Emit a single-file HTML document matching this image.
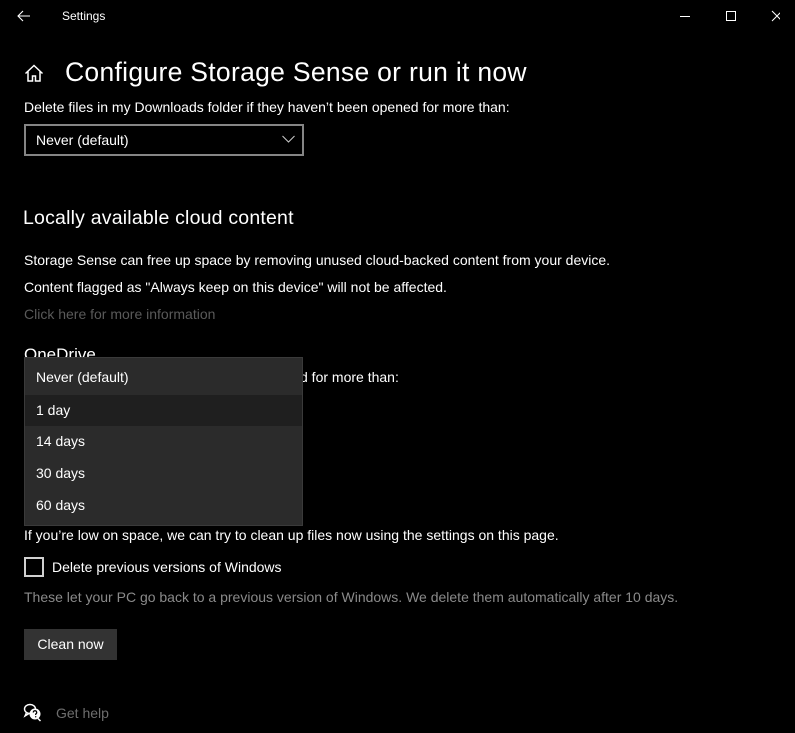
<!DOCTYPE html>
<html><head><meta charset="utf-8"><style>
*{margin:0;padding:0;box-sizing:border-box}
body{width:795px;height:733px;background:#000;color:#fff;font-family:"Liberation Sans",sans-serif;font-size:14px;position:relative;overflow:hidden}
.a{position:absolute;white-space:nowrap}
.g{color:#8a8a8a}
.menu{position:absolute;left:24px;top:357px;width:279px;height:169px;background:#2b2b2b;border:1px solid #3a3a3a}
.menu div{position:absolute;left:0;width:277px;height:30px;line-height:30px;padding-left:11px}
</style></head><body>
<svg class="a" style="left:17px;top:10px" width="14" height="12" viewBox="0 0 14 12"><path d="M13 6H1M6 1L1 6l5 5" stroke="#fff" stroke-width="1.1" fill="none"/></svg>
<div class="a" style="left:62px;top:9px;font-size:12px">Settings</div>
<svg class="a" style="left:680px;top:10px" width="100" height="14" viewBox="0 0 100 14"><path d="M0 6.5h10" stroke="#fff"/><rect x="46.5" y="1.5" width="9" height="9" stroke="#fff" fill="none"/><path d="M92 1l10 10M102 1l-10 10" stroke="#fff"/></svg>
<svg class="a" style="left:24px;top:64px" width="20" height="18" viewBox="0 0 20 18"><path d="M1.5 9.5L10 1.5l8.5 8M4 7.5V17h4.5v-5h3v5H16V7.5" stroke="#fff" stroke-width="1.5" fill="none"/></svg>
<div class="a" style="left:65px;top:57px;font-size:26.5px;letter-spacing:0.3px">Configure Storage Sense or run it now</div>
<div class="a" style="left:24px;top:99px">Delete files in my Downloads folder if they haven’t been opened for more than:</div>
<div class="a" style="left:24px;top:124px;width:280px;height:32px;border:2px solid #858585;padding-left:10px;line-height:28px">Never (default)</div>
<svg class="a" style="left:282px;top:135px" width="13" height="8" viewBox="0 0 13 8"><path d="M0.5 1l6 6 6-6" stroke="#ccc" fill="none"/></svg>
<div class="a" style="left:23px;top:207px;font-size:19.5px;letter-spacing:0.2px">Locally available cloud content</div>
<div class="a" style="left:24px;top:252px">Storage Sense can free up space by removing unused cloud-backed content from your device.</div>
<div class="a" style="left:24px;top:279px">Content flagged as "Always keep on this device" will not be affected.</div>
<div class="a" style="left:24px;top:306px;color:#5a5a5a">Click here for more information</div>
<div class="a" style="left:24px;top:345px;font-size:17px">OneDrive</div>
<div class="a" style="left:300px;top:369px">d for more than:</div>
<div class="menu">
<div style="top:4px">Never (default)</div>
<div style="top:37px;height:31px;background:#1f1f1f">1 day</div>
<div style="top:68px">14 days</div>
<div style="top:100px">30 days</div>
<div style="top:132px">60 days</div>
</div>
<div class="a" style="left:24px;top:527px">If you’re low on space, we can try to clean up files now using the settings on this page.</div>
<div class="a" style="left:24px;top:557px;width:20px;height:20px;border:2px solid #d0d0d0"></div>
<div class="a" style="left:52px;top:559px">Delete previous versions of Windows</div>
<div class="a g" style="left:24px;top:589px">These let your PC go back to a previous version of Windows. We delete them automatically after 10 days.</div>
<div class="a" style="left:24px;top:629px;width:93px;height:31px;background:#333;line-height:31px;text-align:center">Clean now</div>
<svg class="a" style="left:23px;top:703px" width="19" height="19" viewBox="0 0 19 19"><ellipse cx="7" cy="6" rx="5.5" ry="4.5" stroke="#fff" stroke-width="1.4" fill="none"/><path d="M3.5 9.5L2 13l4-2.5" stroke="#fff" stroke-width="1.4" fill="none"/><circle cx="12" cy="11" r="5.5" fill="#fff"/><path d="M10.3 9.5a1.7 1.7 0 1 1 2.4 1.5v1" stroke="#000" stroke-width="1.2" fill="none"/><circle cx="12.7" cy="13.8" r=".7" fill="#000"/><path d="M15 15.5l2.5 2.5" stroke="#fff" stroke-width="1.5"/></svg>
<div class="a" style="left:56px;top:705px;color:#6e6e6e">Get help</div>
</body></html>
